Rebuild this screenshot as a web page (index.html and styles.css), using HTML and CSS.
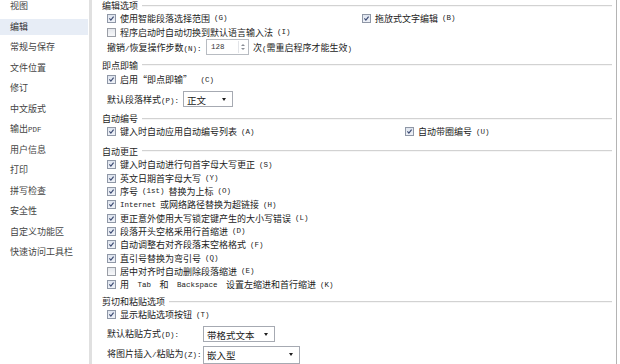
FILE: index.html
```html
<!DOCTYPE html>
<html lang="zh-CN">
<head>
<meta charset="utf-8">
<title>选项 - 编辑</title>
<link rel="stylesheet" href="styles.css">
</head>
<body>
<div class="dialog">
  <nav class="side">
    <ul class="nav">
      <li>视图</li>
      <li class="sel">编辑</li>
      <li>常规与保存</li>
      <li>文件位置</li>
      <li>修订</li>
      <li>中文版式</li>
      <li>输出<span class="k">PDF</span></li>
      <li>用户信息</li>
      <li>打印</li>
      <li>拼写检查</li>
      <li>安全性</li>
      <li>自定义功能区</li>
      <li>快速访问工具栏</li>
    </ul>
  </nav>
  <main class="main">
    <section>
      <div class="hd h11">编辑选项</div>
      <div class="row h14">
        <label class="cb col-a"><span class="box on"><svg viewBox="0 0 9 9"><path d="M1.8 4.4L3.7 6.6L7.2 2"/></svg></span>使用智能段落选择范围<span class="k">(G)</span></label>
        <label class="cb"><span class="box on"><svg viewBox="0 0 9 9"><path d="M1.8 4.4L3.7 6.6L7.2 2"/></svg></span>拖放式文字编辑<span class="k">(B)</span></label>
      </div>
      <div class="row h14">
        <label class="cb"><span class="box"></span>程序启动时自动切换到默认语言输入法<span class="k">(I)</span></label>
      </div>
      <div class="row h16 lab">
        <span class="lbl w99">撤销<span class="k">/</span>恢复操作步数<span class="k">(N):</span></span>
        <span class="spin"><span class="val">128</span><span class="arrows"><i class="up"></i><i class="dn"></i></span></span>
        <span class="after">次<span class="k">(</span>需重启程序才能生效<span class="k">)</span></span>
      </div>
    </section>

    <section class="mt3">
      <div class="hd h14">即点即输</div>
      <div class="row h15">
        <label class="cb"><span class="box on"><svg viewBox="0 0 9 9"><path d="M1.8 4.4L3.7 6.6L7.2 2"/></svg></span>启用“即点即输”<span class="k">&nbsp;(C)</span></label>
      </div>
      <div class="row h18 mt3 lab">
        <span class="lbl w76">默认段落样式<span class="k">(P):</span></span>
        <span class="sel-box s50">正文<i class="caret"></i></span>
      </div>
    </section>

    <section class="mt4">
      <div class="hd h13">自动编号</div>
      <div class="row h13">
        <label class="cb col-b"><span class="box on"><svg viewBox="0 0 9 9"><path d="M1.8 4.4L3.7 6.6L7.2 2"/></svg></span>键入时自动应用自动编号列表<span class="k">(A)</span></label>
        <label class="cb"><span class="box on"><svg viewBox="0 0 9 9"><path d="M1.8 4.4L3.7 6.6L7.2 2"/></svg></span>自动带圈编号<span class="k">(U)</span></label>
      </div>
    </section>

    <section class="mt6">
      <div class="hd h14">自动更正</div>
      <div class="row ac"><label class="cb"><span class="box on"><svg viewBox="0 0 9 9"><path d="M1.8 4.4L3.7 6.6L7.2 2"/></svg></span>键入时自动进行句首字母大写更正<span class="k">(S)</span></label></div>
      <div class="row ac"><label class="cb"><span class="box on"><svg viewBox="0 0 9 9"><path d="M1.8 4.4L3.7 6.6L7.2 2"/></svg></span>英文日期首字母大写<span class="k">(Y)</span></label></div>
      <div class="row ac"><label class="cb"><span class="box on"><svg viewBox="0 0 9 9"><path d="M1.8 4.4L3.7 6.6L7.2 2"/></svg></span>序号<span class="k">(1st)</span>替换为上标<span class="k">(O)</span></label></div>
      <div class="row ac"><label class="cb"><span class="box on"><svg viewBox="0 0 9 9"><path d="M1.8 4.4L3.7 6.6L7.2 2"/></svg></span><span class="k">Internet</span>或网络路径替换为超链接<span class="k">(H)</span></label></div>
      <div class="row ac"><label class="cb"><span class="box on"><svg viewBox="0 0 9 9"><path d="M1.8 4.4L3.7 6.6L7.2 2"/></svg></span>更正意外使用大写锁定键产生的大小写错误<span class="k">(L)</span></label></div>
      <div class="row ac"><label class="cb"><span class="box on"><svg viewBox="0 0 9 9"><path d="M1.8 4.4L3.7 6.6L7.2 2"/></svg></span>段落开头空格采用行首缩进<span class="k">(D)</span></label></div>
      <div class="row ac"><label class="cb"><span class="box on"><svg viewBox="0 0 9 9"><path d="M1.8 4.4L3.7 6.6L7.2 2"/></svg></span>自动调整右对齐段落末空格格式<span class="k">(F)</span></label></div>
      <div class="row ac"><label class="cb"><span class="box on"><svg viewBox="0 0 9 9"><path d="M1.8 4.4L3.7 6.6L7.2 2"/></svg></span>直引号替换为弯引号<span class="k">(Q)</span></label></div>
      <div class="row ac"><label class="cb"><span class="box"></span>居中对齐时自动删除段落缩进<span class="k">(E)</span></label></div>
      <div class="row ac"><label class="cb"><span class="box on"><svg viewBox="0 0 9 9"><path d="M1.8 4.4L3.7 6.6L7.2 2"/></svg></span>用<span class="k">&nbsp;Tab&nbsp;</span>和<span class="k">&nbsp;Backspace&nbsp;</span>设置左缩进和首行缩进<span class="k">(K)</span></label></div>
    </section>

    <section class="mt35">
      <div class="hd h14">剪切和粘贴选项</div>
      <div class="row h12">
        <label class="cb"><span class="box on"><svg viewBox="0 0 9 9"><path d="M1.8 4.4L3.7 6.6L7.2 2"/></svg></span>显示粘贴选项按钮<span class="k">(T)</span></label>
      </div>
      <div class="row h18 mt4 lab">
        <span class="lbl w96">默认粘贴方式<span class="k">(D):</span></span>
        <span class="sel-box s72">带格式文本<i class="caret"></i></span>
      </div>
      <div class="row h18 mt3 lab top">
        <span class="lbl w96">将图片插入<span class="k">/</span>粘贴为<span class="k">(Z):</span></span>
        <span class="sel-box s97">嵌入型<i class="caret"></i></span>
      </div>
    </section>
  </main>
</div>
</body>
</html>
```

FILE: styles.css
```css
html, body {
  margin: 0;
  padding: 0;
  background: #ffffff;
}

body {
  width: 620px;
  height: 364px;
  overflow: hidden;
  font-family: "Noto Sans CJK SC", "Noto Sans", sans-serif;
  font-size: 9px;
  color: #222222;
  text-autospace: no-autospace;
}

.dialog {
  display: flex;
  height: 364px;
}

/* ---------- sidebar ---------- */
.side {
  width: 89px;
  border-right: 3px solid #e0e0e0;
  overflow: hidden;
  color: #444444;
}

.nav {
  list-style: none;
  margin: -4px 0 0 0;
  padding: 0;
}

.nav li {
  width: 78px;
  height: 20.5px;
  line-height: 20.5px;
  padding-left: 10px;
  white-space: nowrap;
}

.nav li.sel {
  background: linear-gradient(transparent 2.3px, #e7edf6 2.3px, #e7edf6 18.3px, transparent 18.3px);
  color: #333333;
}

.k {
  font-family: "Liberation Mono", "DejaVu Sans Mono", monospace;
  font-size: 7.5px;
}

/* ---------- main ---------- */
.main {
  flex: 1;
  margin-right: 3px;
  border-right: 1px solid #b4b4b4;
  overflow: hidden;
}

.mt3 { margin-top: 3px; }
.mt4 { margin-top: 4px; }
.mt6 { margin-top: 6px; }
.mt35 { margin-top: 3.5px; }

.h11 { height: 11px; }
.h12 { height: 12px; }
.h13 { height: 13px; }
.h14 { height: 14px; }
.h15 { height: 15px; }
.h16 { height: 16px; }
.h18 { height: 18px; }
.ac { height: 13.35px; }

.hd {
  display: flex;
  align-items: center;
  gap: 4px;
  padding-left: 10px;
  margin-right: 4px;
  white-space: nowrap;
  color: #1e1e1e;
}

.hd::after {
  content: "";
  flex: 1;
  border-top: 1px solid #d2d2d2;
  border-bottom: 1px solid #f6f6f6;
}

.row {
  display: flex;
  align-items: center;
  padding-left: 15px;
  white-space: nowrap;
}

.row.top {
  align-items: flex-start;
}

.row.top .lbl {
  line-height: 16px;
}

.cb {
  display: flex;
  align-items: center;
  gap: 4px;
}

.col-a { width: 255px; }
.col-b { width: 298px; }

.box {
  width: 7px;
  height: 7px;
  border: 1px solid #9a9ea6;
  background: linear-gradient(#e4e7ec, #f7f8fa);
  display: inline-flex;
  flex: none;
}

.box.on {
  background: linear-gradient(#dfe5ef, #eef1f7);
  border-color: #8f97a6;
}

.box svg {
  width: 7px;
  height: 7px;
  margin: 0;
}

.box svg path {
  fill: none;
  stroke: #3a4870;
  stroke-width: 1.4;
}

/* labels + fields */
.lbl { flex: none; }
.w76 { width: 76px; }
.w96 { width: 96px; }
.w99 { width: 99px; }

.spin {
  height: 14px;
  width: 37px;
  border: 1px solid #b8bcc2;
  display: flex;
  align-items: center;
  justify-content: space-between;
  padding-left: 4px;
  color: #333333;
}

.spin .val {
  font-family: "Liberation Mono", monospace;
  font-size: 7.5px;
}

.arrows {
  width: 8px;
  height: 12px;
  margin-right: 1px;
  border-left: 1px solid #e2e4e8;
  display: flex;
  flex-direction: column;
  align-items: center;
  justify-content: center;
  gap: 2px;
}

.arrows i {
  display: block;
  width: 0;
  height: 0;
  border-left: 2px solid transparent;
  border-right: 2px solid transparent;
}

.arrows .up { border-bottom: 2px solid #8a8e96; }
.arrows .dn { border-top: 2px solid #8a8e96; }

.after {
  margin-left: 4px;
}

.sel-box {
  position: relative;
  height: 16px;
  line-height: 16px;
  border: 1px solid #a6aab2;
  box-sizing: border-box;
  padding-left: 3px;
  background: #ffffff;
  color: #1a1a1a;
  font-size: 9.5px;
}

.s50 { width: 50px; }
.s72 { width: 72px; }
.s97 { width: 97px; height: 18px; }

.caret {
  position: absolute;
  right: 6px;
  top: 6px;
  width: 0;
  height: 0;
  border-left: 2.5px solid transparent;
  border-right: 2.5px solid transparent;
  border-top: 3px solid #1e1e1e;
}
```
